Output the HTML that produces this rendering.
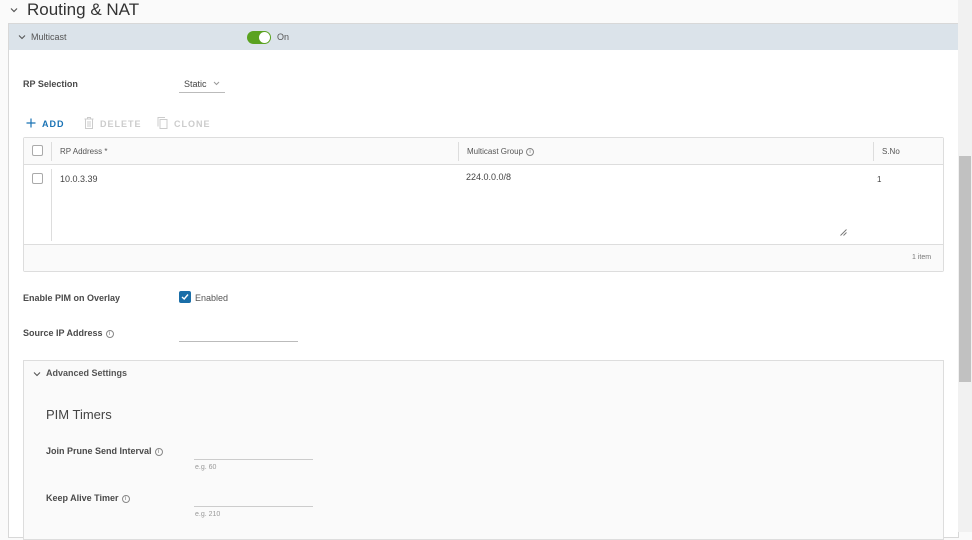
<!DOCTYPE html>
<html><head><style>
*{margin:0;padding:0;box-sizing:border-box}
body{width:972px;height:532px;overflow:hidden;background:#fafafa;font-family:"Liberation Sans",sans-serif;color:#333;position:relative}
.a{position:absolute}
.lbl{font-size:9px;font-weight:bold;color:#4a4a4a}
.t{font-size:9px;color:#444}
.cb{width:11px;height:11px;border:1px solid #aaa;border-radius:2px;background:#fff}
.info{display:inline-block;width:8px;height:8px;border:1px solid #888;border-radius:50%;font-size:6px;line-height:6px;text-align:center;color:#777;vertical-align:1px;margin-left:3px;font-weight:normal}
.line{height:1px;background:#bbb}
</style></head><body>
<svg class="a" style="left:10px;top:7px" width="8" height="6" viewBox="0 0 8 6"><path d="M1 1.5L4 4.5L7 1.5" fill="none" stroke="#555" stroke-width="1.2"/></svg>
<div class="a" style="left:27px;top:0px;font-size:17px;color:#333">Routing &amp; NAT</div>
<div class="a" style="left:8px;top:23px;width:951px;height:515px;background:#fff;border:1px solid #d8d8d8"></div>
<div class="a" style="left:9px;top:24px;width:949px;height:26px;background:#dbe3ea"></div>
<svg class="a" style="left:18px;top:34px" width="8" height="6" viewBox="0 0 8 6"><path d="M1 1.5L4 4.5L7 1.5" fill="none" stroke="#555" stroke-width="1.1"/></svg>
<div class="a" style="left:31px;top:32px;font-size:9px;color:#555">Multicast</div>
<div class="a" style="left:247px;top:31px;width:24px;height:13px;border-radius:7px;background:#5aa220"></div>
<div class="a" style="left:259px;top:32px;width:11px;height:11px;border-radius:50%;background:#fff"></div>
<div class="a" style="left:277px;top:32px;font-size:9px;color:#555">On</div>

<div class="a lbl" style="left:23px;top:79px">RP Selection</div>
<div class="a t" style="left:184px;top:79px">Static</div>
<svg class="a" style="left:213px;top:81px" width="7" height="5" viewBox="0 0 7 5"><path d="M1 1L3.5 3.5L6 1" fill="none" stroke="#999" stroke-width="1"/></svg>
<div class="a" style="left:179px;top:92px;width:46px;height:1px;background:#bbb"></div>

<svg class="a" style="left:26px;top:118px" width="10" height="10" viewBox="0 0 10 10"><path d="M5 0.5V9.5M0.5 5H9.5" stroke="#1a73b5" stroke-width="1.2"/></svg>
<div class="a" style="left:42px;top:119px;font-size:9px;color:#1a73b5;font-weight:bold;letter-spacing:1px">ADD</div>
<svg class="a" style="left:84px;top:117px" width="10" height="12" viewBox="0 0 10 12"><path d="M0.5 2H9.5M3.5 2V0.5H6.5V2M1.5 2V11.5H8.5V2M4 4V10M6 4V10" fill="none" stroke="#ccc" stroke-width="1"/></svg>
<div class="a" style="left:100px;top:119px;font-size:9px;color:#ccc;font-weight:bold;letter-spacing:1px">DELETE</div>
<svg class="a" style="left:157px;top:117px" width="11" height="12" viewBox="0 0 11 12"><path d="M3 2.5H10V11.5H3ZM1 9.5V0.5H8" fill="none" stroke="#ccc" stroke-width="1"/></svg>
<div class="a" style="left:174px;top:119px;font-size:9px;color:#ccc;font-weight:bold;letter-spacing:1px">CLONE</div>

<div class="a" style="left:23px;top:137px;width:921px;height:135px;border:1px solid #ddd;border-radius:2px;background:#fff"></div>
<div class="a" style="left:24px;top:138px;width:919px;height:27px;background:#fafafa;border-bottom:1px solid #ddd"></div>
<div class="a cb" style="left:32px;top:145px"></div>
<div class="a" style="left:51px;top:142px;width:1px;height:19px;background:#ddd"></div>
<div class="a" style="left:60px;top:147px;font-size:8px;color:#555">RP Address *</div>
<div class="a" style="left:458px;top:142px;width:1px;height:19px;background:#ddd"></div>
<div class="a" style="left:467px;top:147px;font-size:8px;color:#555">Multicast Group<span class="info">i</span></div>
<div class="a" style="left:873px;top:142px;width:1px;height:19px;background:#ddd"></div>
<div class="a" style="left:882px;top:147px;font-size:8px;color:#555">S.No</div>
<div class="a cb" style="left:32px;top:173px"></div>
<div class="a" style="left:51px;top:169px;width:1px;height:72px;background:#ddd"></div>
<div class="a t" style="left:60px;top:174px">10.0.3.39</div>
<div class="a t" style="left:466px;top:172px">224.0.0.0/8</div>
<div class="a t" style="left:877px;top:175px;font-size:8px">1</div>
<svg class="a" style="left:840px;top:229px" width="7" height="7" viewBox="0 0 7 7"><path d="M0.5 6.5L6.5 0.5M3.5 6.5L6.5 3.5" stroke="#777" stroke-width="0.9"/></svg>
<div class="a" style="left:24px;top:244px;width:919px;height:27px;background:#fafafa;border-top:1px solid #ddd"></div>
<div class="a" style="left:912px;top:254px;font-size:7px;color:#777">1 item</div>

<div class="a lbl" style="left:23px;top:293px">Enable PIM on Overlay</div>
<div class="a" style="left:179px;top:291px;width:12px;height:12px;border-radius:2px;background:#1a6ea8"></div>
<svg class="a" style="left:181px;top:293px" width="8" height="8" viewBox="0 0 8 8"><path d="M1 4L3.2 6L7 1.5" fill="none" stroke="#fff" stroke-width="1.4"/></svg>
<div class="a t" style="left:195px;top:293px;color:#555">Enabled</div>
<div class="a lbl" style="left:23px;top:328px">Source IP Address<span class="info">i</span></div>
<div class="a line" style="left:179px;top:341px;width:119px"></div>

<div class="a" style="left:23px;top:360px;width:921px;height:180px;border:1px solid #ddd;background:#fafafa"></div>
<svg class="a" style="left:33px;top:371px" width="8" height="6" viewBox="0 0 8 6"><path d="M1 1.5L4 4.5L7 1.5" fill="none" stroke="#555" stroke-width="1.1"/></svg>
<div class="a lbl" style="left:46px;top:368px;color:#555">Advanced Settings</div>
<div class="a" style="left:46px;top:407px;font-size:13px;color:#444">PIM Timers</div>
<div class="a lbl" style="left:46px;top:446px">Join Prune Send Interval<span class="info">i</span></div>
<div class="a line" style="left:194px;top:459px;width:119px;background:#ccc"></div>
<div class="a" style="left:195px;top:464px;font-size:7px;color:#999">e.g. 60</div>
<div class="a lbl" style="left:46px;top:493px">Keep Alive Timer<span class="info">i</span></div>
<div class="a line" style="left:194px;top:506px;width:119px;background:#ccc"></div>
<div class="a" style="left:195px;top:511px;font-size:7px;color:#999">e.g. 210</div>

<div class="a" style="left:958px;top:0;width:14px;height:532px;background:#f1f1f1"></div>
<div class="a" style="left:959px;top:156px;width:12px;height:226px;background:#c1c1c1"></div>
</body></html>
